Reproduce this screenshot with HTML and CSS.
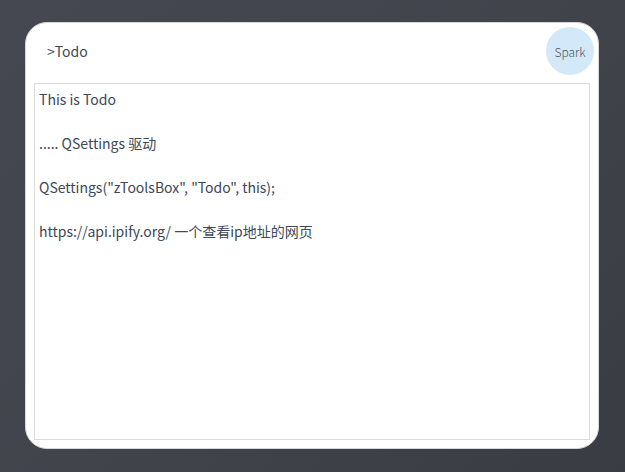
FILE: index.html
```html
<!DOCTYPE html>
<html>
<head>
<meta charset="utf-8">
<link rel="stylesheet" href="styles.css">
</head>
<body>
<div class="card">
  <div class="header">
    <div class="title">&gt;Todo</div>
    <div class="spark">Spark</div>
  </div>
  <div class="editor">
    <p>This is Todo</p>
    <p class="blank">&nbsp;</p>
    <p>..... QSettings 驱动</p>
    <p class="blank">&nbsp;</p>
    <p>QSettings("zToolsBox", "Todo", this);</p>
    <p class="blank">&nbsp;</p>
    <p>https://api.ipify.org/ 一个查看ip地址的网页</p>
  </div>
</div>
</body>
</html>
```
FILE: styles.css
```css
html, body {
  margin: 0;
  height: 100%;
}
body {
  background: linear-gradient(135deg, #464851 0%, #42444c 50%, #3a3c44 100%);
  font-family: "Noto Sans CJK SC", "Noto Sans", sans-serif;
  color: #3d4858;
  overflow: hidden;
}
.card {
  box-sizing: border-box;
  margin: 22px 0 0 25px;
  width: 574px;
  height: 427px;
  background: #fff;
  border-radius: 22px;
  border: 1px solid #d6d7da;
  padding: 4px 4px 8px 8px;
  display: flex;
  flex-direction: column;
}
.header {
  height: 48px;
  margin-bottom: 8px;
  display: flex;
  align-items: center;
  justify-content: space-between;
}
.title {
  padding-left: 13px;
  font-size: 14px;
}
.spark {
  width: 48px;
  height: 48px;
  border-radius: 50%;
  background: #d3e9f9;
  display: flex;
  align-items: center;
  justify-content: center;
  font-size: 12px;
  font-weight: 300;
  color: #4b5563;
}
.editor {
  flex: 1;
  margin-right: 4px;
  border: 1px solid #dcdcdc;
  padding: 4px 4px;
  font-size: 14px;
  line-height: 22px;
}
.editor p {
  margin: 0;
}
```
